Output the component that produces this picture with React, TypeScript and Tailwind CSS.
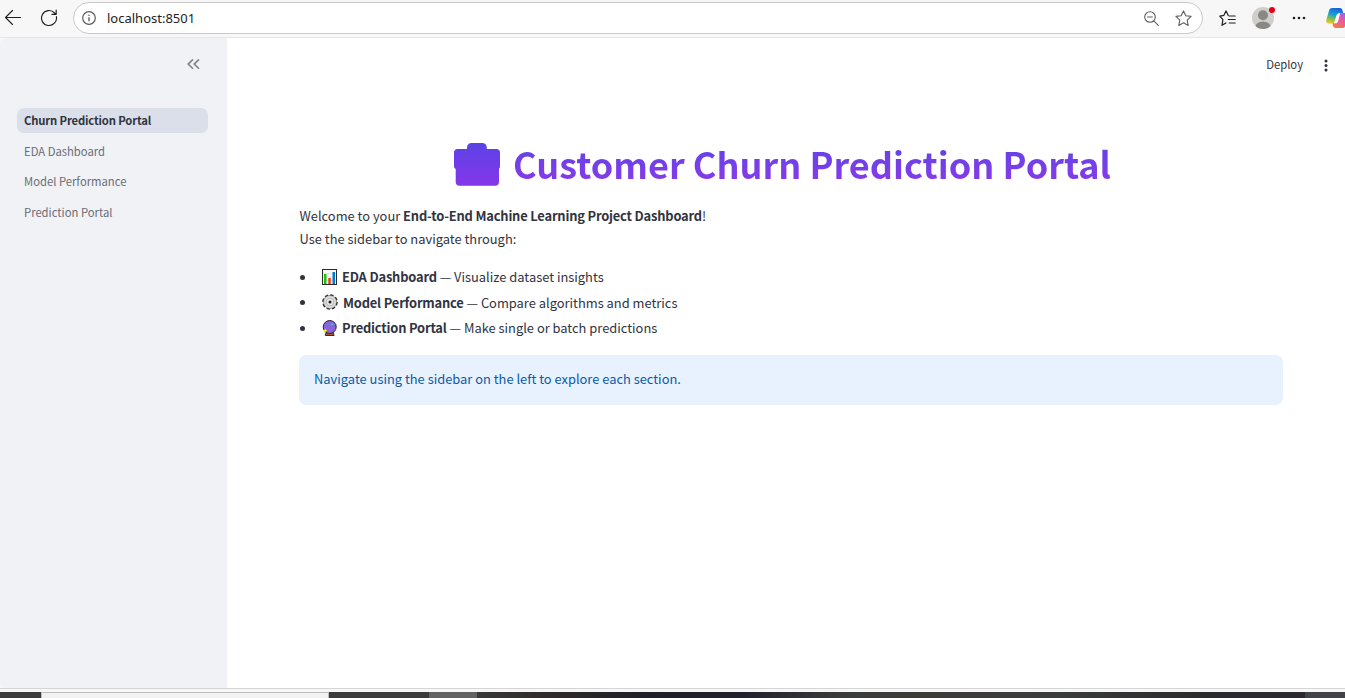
import type { ReactNode } from "react";

const pages = ["Churn Prediction Portal", "EDA Dashboard", "Model Performance", "Prediction Portal"];

function BackIcon() {
  return (
    <svg width="18" height="18" viewBox="0 0 18 18" fill="none" stroke="#1f1f1f" strokeWidth="1.1" strokeLinecap="round" strokeLinejoin="round">
      <path d="M16.500 8.500H1.500M8.500 1.500l-7 7 7 7" />
    </svg>
  );
}

function ReloadIcon() {
  return (
    <svg width="18" height="18" viewBox="0 0 18 18" fill="none" stroke="#1f1f1f" strokeWidth="1.150" strokeLinecap="round" strokeLinejoin="round">
      <path d="M16.400 7.600A7.500 7.500 0 1 1 14.600 4L16 5.200M16.200 1v4.300h-4.300" />
    </svg>
  );
}

function InfoIcon() {
  return (
    <svg width="14" height="14" viewBox="0 0 14 14" fill="none" stroke="#5a5a5a">
      <circle cx="7" cy="7" r="6.300" strokeWidth="1.200" />
      <path d="M7 6.200v4" strokeWidth="1.400" />
      <circle cx="7" cy="4.200" r=".8" fill="#5a5a5a" stroke="none" />
    </svg>
  );
}

function ZoomOutIcon() {
  return (
    <svg width="15" height="15" viewBox="0 0 15 15" fill="none" stroke="#5f5f5f" strokeWidth="1.100" strokeLinecap="round">
      <circle cx="6" cy="6" r="5.300" />
      <path d="M3.600 6h4.800M9.800 9.800l4.500 4.500" />
    </svg>
  );
}

function StarIcon() {
  return (
    <svg width="17" height="17" viewBox="0 0 17 17" fill="none" stroke="#5f5f5f" strokeWidth="1.100" strokeLinejoin="round">
      <path d="M8.500 .9l2.300 4.800 5.300.7-3.900 3.700 1 5.300-4.700-2.600-4.700 2.600 1-5.300L.9 6.400l5.300-.7z" />
    </svg>
  );
}

function FavoritesIcon() {
  return (
    <svg width="17" height="17" viewBox="0 0 17 17" fill="none" stroke="#1f1f1f" strokeWidth="1.200" strokeLinejoin="round" strokeLinecap="round">
      <path d="M9.300 5.500 7 .9 4.900 5.300.8 6.200l3.100 3.500-.9 5.600 3.900-2.300" />
      <path d="M10.300 6h5.900M9.300 9.500h6.900M10.300 13h5.900" />
    </svg>
  );
}

function Avatar() {
  return (
    <span className="relative flex h-[22px] w-[22px]">
      <svg width="22" height="22" viewBox="0 0 22 22">
        <defs>
          <clipPath id="face">
            <circle cx="11" cy="11" r="11" />
          </clipPath>
        </defs>
        <g clipPath="url(#face)">
          <rect width="22" height="22" fill="#d0cecb" />
          <circle cx="11" cy="8.200" r="5" fill="#8a8784" />
          <ellipse cx="11" cy="20.500" rx="8" ry="6" fill="#8a8784" />
        </g>
      </svg>
      <span className="absolute top-0 left-[17px] h-1.5 w-1.5 rounded-full bg-[#e60012]" />
    </span>
  );
}

function CopilotIcon() {
  return (
    <svg width="22" height="20" viewBox="0 0 22 20" className="shrink-0">
      <defs>
        <linearGradient id="cpLeft" x1=".6" y1="0" x2=".3" y2="1">
          <stop offset="0" stopColor="#1b62d0" />
          <stop offset=".4" stopColor="#1899e0" />
          <stop offset=".7" stopColor="#6fbf5a" />
          <stop offset="1" stopColor="#f5c518" />
        </linearGradient>
        <linearGradient id="cpRight" x1=".8" y1="0" x2=".2" y2="1">
          <stop offset="0" stopColor="#a75cf0" />
          <stop offset=".5" stopColor="#ee5a9a" />
          <stop offset="1" stopColor="#f4803a" />
        </linearGradient>
      </defs>
      <path d="M6 0h8c1.500 0 2 1 2.500 2.500L17.300 5H14c-2 0-2.800 1-3.300 2.800L9 13c-.5 1.600-1.200 2.500-3 2.500H2.800C.4 15.500-.1 13.600.4 11.700L3 2.700C3.500 1 4.400 0 6 0z" fill="url(#cpLeft)" />
      <path d="M16 20H9.500c-1.500 0-2.200-1-2.600-2.500L6.300 15.500c1.500 0 2.300-1 2.800-2.500l1.700-5.200C11.300 6 12.500 5 14.500 5H18.500c2.600 0 3.900 1.800 3.300 4L19.500 17.300C19 19 17.600 20 16 20z" fill="url(#cpRight)" />
      <path d="M14.200 5.200 12.300 12.500c-.6 2-1.300 2.800-2.800 2.800H8L10.300 8c.6-1.900 1.600-2.800 3.900-2.800z" fill="#fff" />
    </svg>
  );
}

function BriefcaseIcon() {
  return (
    <svg width="46" height="43" viewBox="0 0 46 43" className="shrink-0">
      <defs>
        <linearGradient id="brand" x1="0" y1="0" x2="0" y2="1">
          <stop offset="0" stopColor="#5a43e6" />
          <stop offset="1" stopColor="#8636e9" />
        </linearGradient>
      </defs>
      <path d="M13 6V4.500c0-2.500 2-4.500 4.500-4.500h10.800c2.500 0 4.500 2 4.500 4.500V6h9.700C44.500 6 46 7.500 46 9.500V23.500c0 1-.3 1.800-1 2.300V39c0 2.200-1.500 3.700-3.700 3.700H5.400C3.200 42.700 1.700 41.200 1.700 39V26C.8 25.500 0 24.500 0 23.500V9.500C0 7.500 1.500 6 3.500 6z" fill="url(#brand)" />
    </svg>
  );
}

function ChartEmoji() {
  return (
    <svg width="15" height="16" viewBox="0 0 15 16">
      <rect x=".5" y=".5" width="14" height="15" fill="#f7f7f7" stroke="#2a2a2a" />
      <path d="M1 4.500h13M1 8h13M1 11.500h13" stroke="#d5d5d5" strokeWidth=".6" />
      <rect x="2" y="5" width="2.500" height="10" fill="#16c60c" />
      <rect x="6.300" y="9" width="2.500" height="6" fill="#f03a17" />
      <rect x="10.500" y="3" width="2.500" height="12" fill="#0078d7" />
    </svg>
  );
}

function GearEmoji() {
  return (
    <svg width="16" height="16" viewBox="0 0 16 16" fill="none">
      <circle cx="8" cy="8" r="7" stroke="#2a2a2a" strokeWidth="1.600" strokeDasharray="3.400 2.098" />
      <circle cx="8" cy="8" r="6.500" fill="#dedede" stroke="#555" strokeWidth=".6" />
      <circle cx="8" cy="8" r="3.900" stroke="#999" strokeWidth=".6" fill="#e6e6e6" />
      <circle cx="8" cy="8" r="1.500" fill="#1f1f1f" />
    </svg>
  );
}

function CrystalEmoji() {
  return (
    <svg width="15" height="16" viewBox="0 0 15 16">
      <path d="M4.200 12h7l.9 3.500H3.300z" fill="#a4562a" stroke="#222" strokeWidth=".9" />
      <circle cx="7.700" cy="7" r="6.500" fill="#8764d8" stroke="#2a2238" strokeWidth="1" />
      <path d="M3.200 8.200l.7 1.700 1.700.7-1.700.7-.7 1.700-.7-1.700-1.700-.7 1.700-.7z" fill="#fff100" />
      <path d="M10 2.500l.5 1.300 1.300.5-1.300.5-.5 1.300-.5-1.300-1.300-.5 1.300-.5z" fill="#3fc8f0" />
    </svg>
  );
}

function Bold({ children }: { children: ReactNode }) {
  return <strong className="font-bold tracking-[-0.176px]">{children}</strong>;
}

const features = [
  { icon: <ChartEmoji />, name: "EDA Dashboard", text: "Visualize dataset insights", pad: "pl-[5px]" },
  { icon: <GearEmoji />, name: "Model Performance", text: "Compare algorithms and metrics", pad: "pl-[5px]" },
  { icon: <CrystalEmoji />, name: "Prediction Portal", text: "Make single or batch predictions", pad: "pl-[5px]" },
];

function BrowserBar() {
  return (
    <header className="flex h-[38px] shrink-0 items-start overflow-hidden border-b border-[#e6e6e6] bg-[#f7f7f7] pl-1">
      <div className="flex h-9 w-[69px] shrink-0 items-center gap-[18px]">
        <BackIcon />
        <ReloadIcon />
      </div>
      <div className="mt-0.5 flex h-8 w-[1130px] shrink-0 items-center rounded-full border border-[#c9c9c9] bg-white pr-2.5 pl-2">
        <InfoIcon />
        <span className="ml-[11px] font-['Noto_Sans',sans-serif] text-[13px] leading-5 text-[#222]">localhost:8501</span>
        <span className="ml-auto flex items-center gap-4">
          <ZoomOutIcon />
          <StarIcon />
        </span>
      </div>
      <div className="flex h-9 shrink-0 items-center pl-4">
        <FavoritesIcon />
        <span className="ml-4">
          <Avatar />
        </span>
        <svg width="14" height="4" viewBox="0 0 14 4" className="ml-[18px]" fill="#1f1f1f">
          <circle cx="2" cy="2" r="1.300" />
          <circle cx="7" cy="2" r="1.300" />
          <circle cx="12" cy="2" r="1.300" />
        </svg>
        <span className="ml-5">
          <CopilotIcon />
        </span>
      </div>
    </header>
  );
}

function Sidebar() {
  return (
    <aside className="flex w-[227px] shrink-0 flex-col rounded-l-md bg-[#f0f2f6] pr-[19px] pl-[17px]">
      <div className="flex h-[70px] items-start justify-end pt-[21px] pr-2">
        <svg width="13" height="11" viewBox="0 0 13 11" fill="none" stroke="#808289" strokeWidth="1.600">
          <path d="M6 .4 1.200 5.100l4.800 4.700M12 .4 7.200 5.100l4.800 4.700" />
        </svg>
      </div>
      <nav className="flex flex-col gap-[5.6px]">
        {pages.map((page, i) => (
          <a
            key={page}
            className={
              i === 0
                ? "flex h-[25px] items-center rounded-[7px] bg-[#dadfe9] pl-[7px] text-[11.28px] font-bold tracking-[-0.150px] text-[#31333f]"
                : "flex h-[25px] items-center rounded-[7px] pl-[7px] text-[11.28px] text-[#6b6d76]"
            }
          >
            {page}
          </a>
        ))}
      </nav>
    </aside>
  );
}

export default function App() {
  return (
    <div className="flex h-[698px] w-[1345px] flex-col overflow-hidden bg-[#f7f7f7] font-['Noto_Sans_CJK_SC',sans-serif] text-[#31333f]">
      <BrowserBar />
      <div className="flex h-[650px] shrink-0">
        <Sidebar />
        <main className="flex flex-1 flex-col bg-white">
          <div className="flex h-[54px] items-center justify-end gap-[21px] pr-[17px] text-[11.28px]">
            <span className="pb-0.5">Deploy</span>
            <svg width="4" height="13" viewBox="0 0 4 13" fill="#31333f">
              <circle cx="2" cy="2" r="1.500" />
              <circle cx="2" cy="6.500" r="1.500" />
              <circle cx="2" cy="11" r="1.500" />
            </svg>
          </div>
          <div className="flex flex-col pt-[41px] pr-[62px] pl-[72px]">
            <div className="flex h-[60px] items-center justify-center gap-[13px] pr-[17px]">
              <span className="pt-0.5">
                <BriefcaseIcon />
              </span>
              <h1 className="bg-gradient-to-b from-[#4f46e5] to-[#9333ea] bg-clip-text text-[36.05px] leading-[60px] font-bold whitespace-nowrap text-transparent">
                Customer Churn Prediction Portal
              </h1>
            </div>
            <p className="mt-[11px] pl-[0.500px] text-[12.89px] leading-[23px]">
              Welcome to your <Bold>End-to-End Machine Learning Project Dashboard</Bold>!
              <br />
              Use the sidebar to navigate through:
            </p>
            <ul className="mt-3.5 flex flex-col text-[12.89px]">
              {features.map((f) => (
                <li key={f.name} className="flex h-[25.500px] items-center">
                  <span className="mt-px ml-px h-[5px] w-[5px] rounded-full bg-[#31333f]" />
                  <span className="ml-[17px]">{f.icon}</span>
                  <span className={f.pad}>
                    <Bold>{f.name}</Bold> — {f.text}
                  </span>
                </li>
              ))}
            </ul>
            <div className="mt-3.5 flex h-[50px] items-center rounded-[7px] bg-[#e8f2ff] pb-0.5 pl-[15px] text-[12.89px] text-[#0c5aa6]">
              Navigate using the sidebar on the left to explore each section.
            </div>
          </div>
        </main>
      </div>
      <div className="h-1 shrink-0 border-t border-[#d4d4d4] bg-[#f7f7f7]" />
      <footer className="flex h-1.5 shrink-0">
        <span className="w-[41px] bg-[#3b3b3b]" />
        <span className="w-72 border border-b-0 border-[#bdbdbd] bg-[#f2f2f2]" />
        <span className="w-[100px] bg-[#3b3b3b]" />
        <span className="w-12 bg-[#626262]" />
        <span className="flex-1 bg-[linear-gradient(90deg,#383838_0%,#302b2b_8%,#202028_20%,#20212a_32%,#393b3b_44%,#3d3b38_53%,#3b3c3c_70%,#2b2a2d_88%,#2a292e_100%)]" />
        <span className="w-10 bg-[#424346]" />
      </footer>
    </div>
  );
}
